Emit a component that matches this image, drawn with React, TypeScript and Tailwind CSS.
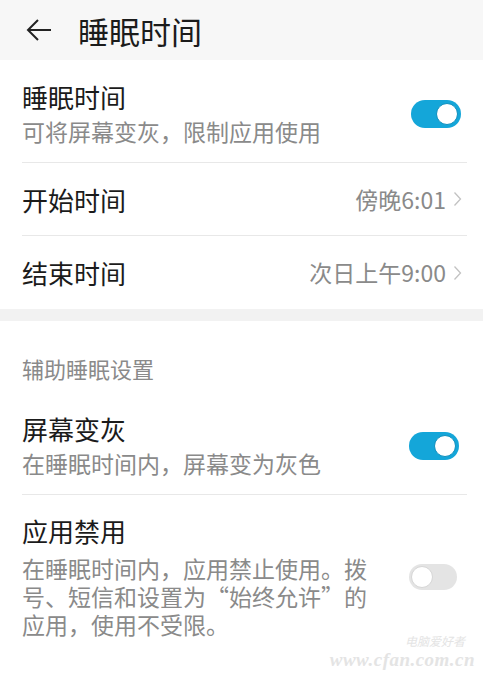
const font = { fontFamily: '"Noto Sans CJK SC", "Noto Sans", sans-serif' };

function Toggle({ on }: { on: boolean }) {
  return on ? (
    <div className="flex h-[28px] w-[50px] items-center justify-end rounded-full bg-[#14a6d9] pr-[3px]">
      <div className="h-[22px] w-[22px] rounded-full border border-[#0f8fbd] bg-white" />
    </div>
  ) : (
    <div className="flex h-[26px] w-[48px] items-center justify-start rounded-full bg-[#e4e4e4] pl-[2px]">
      <div className="h-[22px] w-[22px] rounded-full border border-[#d6d6d6] bg-white" />
    </div>
  );
}

function Chevron() {
  return (
    <svg width="9" height="16" viewBox="0 0 9 16" className="ml-[7px]">
      <polyline points="1.5,1.5 7.5,8 1.5,14.5" fill="none" stroke="#c2c2c2" strokeWidth="1.3" />
    </svg>
  );
}

function ValueRow({ label, value, divider }: { label: string; value: string; divider?: boolean }) {
  return (
    <div className="pl-[22px] pr-[16px]">
      <div className={`flex h-[73px] items-center justify-between ${divider ? "border-b border-[#e8e8e8]" : ""}`}>
        <span className="text-[26px] text-[#1b1b1b]">{label}</span>
        <div className="flex items-center pr-[5px]">
          <span className="text-[23px] text-[#8a8a8a]">{value}</span>
          <Chevron />
        </div>
      </div>
    </div>
  );
}

export default function App() {
  return (
    <div className="relative h-[684px] w-[483px] overflow-hidden bg-white" style={font}>
      <header className="flex h-[60px] items-center bg-[#f7f7f7] pl-[26px]">
        <svg width="26" height="24" viewBox="0 0 26 24">
          <path d="M25 12H2M12 2L2 12l10 10" fill="none" stroke="#222" strokeWidth="2" />
        </svg>
        <h1 className="ml-[26px] text-[31px] leading-none text-[#1b1b1b]">睡眠时间</h1>
      </header>

      <div className="pl-[22px] pr-[16px]">
        <div className="flex items-center justify-between border-b border-[#e8e8e8] pb-[16px] pt-[21px]">
          <div>
            <div className="text-[26px] leading-[32px] text-[#1b1b1b]">睡眠时间</div>
            <div className="mt-[3px] text-[23px] leading-[30px] text-[#8a8a8a]">可将屏幕变灰，限制应用使用</div>
          </div>
          <div className="mr-[6px]">
            <Toggle on />
          </div>
        </div>
      </div>
      <ValueRow label="开始时间" value="傍晚6:01" divider />
      <ValueRow label="结束时间" value="次日上午9:00" />

      <div className="h-[12px] bg-[#f2f2f2]" />

      <div className="pl-[22px] pt-[32px] text-[22px] leading-[30px] text-[#8a8a8a]">辅助睡眠设置</div>

      <div className="pl-[22px] pr-[16px]">
        <div className="flex items-center justify-between border-b border-[#e8e8e8] pb-[16px] pt-[30px]">
          <div>
            <div className="text-[26px] leading-[32px] text-[#1b1b1b]">屏幕变灰</div>
            <div className="mt-[3px] text-[23px] leading-[30px] text-[#8a8a8a]">在睡眠时间内，屏幕变为灰色</div>
          </div>
          <div className="mr-[8px]">
            <Toggle on />
          </div>
        </div>
        <div className="flex items-center justify-between pt-[20px]">
          <div>
            <div className="text-[26px] leading-[32px] text-[#1b1b1b]">应用禁用</div>
            <div className="mt-[7px] text-[23px] leading-[28px] text-[#8a8a8a]">
              <div>在睡眠时间内，应用禁止使用。拨</div>
              <div>号、短信和设置为“始终允许”的</div>
              <div>应用，使用不受限。</div>
            </div>
          </div>
          <div className="mr-[10px]">
            <Toggle on={false} />
          </div>
        </div>
      </div>

      <div className="absolute bottom-[14px] right-[8px] flex flex-col items-end gap-[2px] italic text-[#e4e4e4]">
        <span className="mr-[10px] text-[12px] leading-[14px]">电脑爱好者</span>
        <span className="text-[19px] font-bold leading-[20px] tracking-wide" style={{ fontFamily: '"Liberation Serif", serif' }}>
          www.cfan.com.cn
        </span>
      </div>
    </div>
  );
}
